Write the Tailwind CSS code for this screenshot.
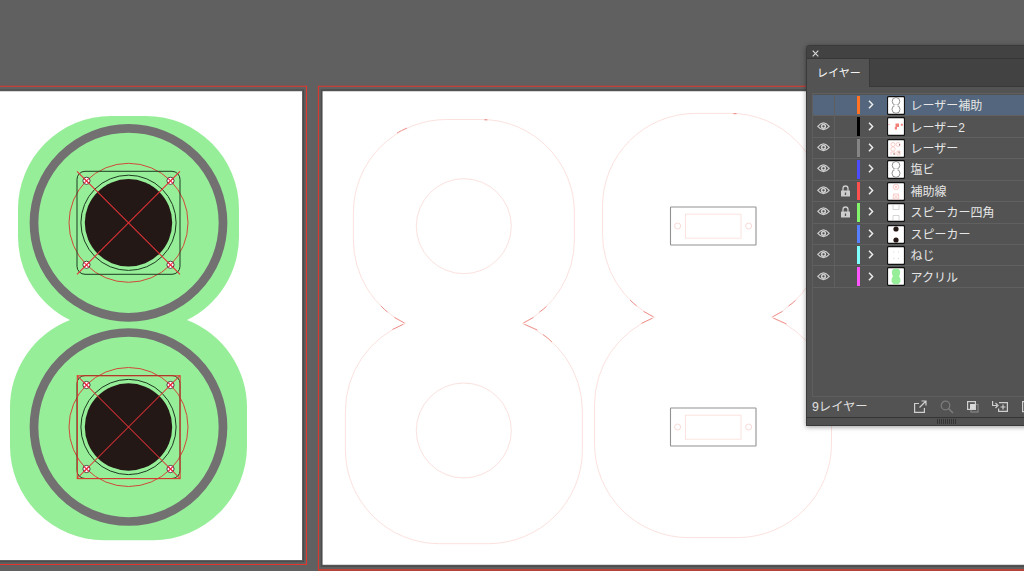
<!DOCTYPE html>
<html lang="ja">
<head>
<meta charset="utf-8">
<title>レイヤー</title>
<script src="https://cdn.jsdelivr.net/npm/@tailwindcss/browser@4"></script>
</head>
<body class="relative h-[571px] w-[1024px] overflow-hidden bg-[#606060] font-['Liberation_Sans','Noto_Sans_CJK_JP',sans-serif]">
<svg class="block" width="1024" height="571" viewBox="0 0 1024 571" fill="none">
  <defs>
    <path id="body" d="M93 0H128A93 93 0 0 1 221 93V120A93 93 0 0 1 169 204A94 94 0 0 1 229 292V330A94 94 0 0 1 135 424.2H86A94 94 0 0 1 -8 330V292A94 94 0 0 1 52 204A93 93 0 0 1 0 120V93A93 93 0 0 1 93 0Z"/>
    <g id="hole"><circle r="3.6" fill="#fff" stroke="#3b3030" stroke-width=".9"/><path d="M-2.5-2.5L2.5 2.5M2.5-2.5L-2.5 2.5" stroke="#f0274a" stroke-width="1.1"/></g>
    <g id="speaker">
      <circle r="94.5" stroke="#727071" stroke-width="8.7"/>
      <circle r="43.7" fill="#231815"/>
      <circle r="47.6" stroke="#1d3b20" stroke-width="1"/>
      <circle r="59.5" stroke="#cf4a37" stroke-width="1"/>
      <rect x="-51.5" y="-51.5" width="103" height="103" rx="8" stroke="#1d3b20" stroke-width="1"/>
      <use href="#hole" x="-42" y="-42"/><use href="#hole" x="42" y="-42"/><use href="#hole" x="-42" y="42"/><use href="#hole" x="42" y="42"/>
      <path d="M-51.5-51.5L51.5 51.5M51.5-51.5L-51.5 51.5" stroke="#e23136" stroke-width="1.05"/>
    </g>
    <g id="plate">
      <rect x=".5" y=".5" width="85.5" height="38" rx=".5" stroke="#929292" stroke-width="1.1"/>
      <rect x="15.5" y="7.7" width="55.5" height="24" stroke="#fbe0dc" stroke-width=".9"/>
      <circle cx="7.6" cy="19.5" r="3" stroke="#f6d5d2" stroke-width=".9"/><circle cx="78.6" cy="19.5" r="3" stroke="#f6d5d2" stroke-width=".9"/>
    </g>
    <g id="accents" stroke="#ec857f" stroke-width="1">
      <path d="M27.500 186.500Q31 190 34 192.500M41 198L51 203.500M39 210L50 204.700M193 187Q190 190 186 192.500M180 198L170 203.500M171 204.700L184 210.500" opacity=".85"/>
      <path d="M131 .3h3"/>
    </g>
  </defs>
  <!-- left artboard -->
  <path d="M0 86.300H306.500V564.500H0" stroke="#df372d" stroke-width="1.1"/>
  <path d="M0 90H303.600V561.600H0" stroke="#4b4b4b" stroke-width="1.2"/>
  <path d="M0 91.200H302V560H0Z" fill="#fff"/>
  <!-- right artboard -->
  <path d="M1024 86.300H318.400V569.800H1024" stroke="#df372d" stroke-width="1.1"/>
  <path d="M318 569.900H1024" stroke="#c23f35" stroke-width="1.9"/>
  <path d="M1024 90H321.500V566.200H1024" stroke="#4b4b4b" stroke-width="1.4"/>
  <path d="M1024 91.200H322.600V564.800H1024Z" fill="#fff"/>

  <use href="#body" x="18" y="116" fill="#97ee99"/>
  <use href="#speaker" x="128.500" y="222.800"/>
  <use href="#speaker" x="128.500" y="427"/>
  <rect x="77.300" y="375.800" width="102.800" height="102.800" stroke="#dc3b2f" stroke-width="1.1"/>

  <use href="#body" x="353.400" y="119.500" stroke="#fbdeda" stroke-width=".9"/>
  <use href="#accents" x="353.400" y="119.500"/>
  <path d="M397 133Q401 130.500 407 128" stroke="#ef9a94" stroke-width="1"/>
  <path d="M543 334.500Q548 338 552 342" stroke="#ef9a94" stroke-width="1"/>
  <circle cx="463.800" cy="226.200" r="47.500" stroke="#fbe2df" stroke-width="1"/>
  <circle cx="463.800" cy="430.500" r="47.500" stroke="#fbe2df" stroke-width="1"/>
  <use href="#body" x="602.500" y="113.400" stroke="#fbdeda" stroke-width=".9"/>
  <use href="#accents" x="602.500" y="113.400"/>
  <use href="#plate" x="670" y="206.500"/>
  <use href="#plate" x="670" y="407.500"/>
</svg>

<section class="absolute left-[806px] top-[45px] flex h-[381px] w-[231px] flex-col overflow-hidden rounded-tl-[4px] border-b border-l border-t border-[#3a3a3a] bg-[#535353] text-[#e0e0e0] shadow-[0_1px_5px_rgba(0,0,0,0.4)]">
  <header class="flex h-[13px] shrink-0 items-center border-b border-[#363636] bg-[#424242] pl-[5px] pt-[3px]">
    <svg width="7" height="7" viewBox="0 0 7 7"><path d="M.7.7L6.300 6.300M6.300.7L.7 6.300" stroke="#d4d4d4" stroke-width="1.200"/></svg>
  </header>
  <nav class="flex h-[28px] shrink-0 bg-[#424242]">
    <div class="flex w-[63px] items-center whitespace-nowrap border-r border-[#383838] bg-[#535353] pl-[10px] text-[11px] leading-none text-[#f5f5f5]">レイヤー</div>
    <div class="grow border-b border-[#383838]"></div>
  </nav>
  <div class="ml-[5px] mt-[6px] h-[304px] shrink-0 border border-[#5e5e5e]">
    <div id="rows" class="flex flex-col pt-[1px]"></div>
  </div>
  <footer class="flex h-[20px] shrink-0 items-center pl-[5px]">
    <span class="w-[101px] whitespace-nowrap pt-[1px] text-[12.300px] leading-none">9レイヤー</span>
    <svg width="112" height="16" viewBox="0 0 112 16" fill="none" stroke="#cfcfcf" stroke-width="1.200">
      <path d="M6 4.500H1.600V13.400H11.400V9M6.500 8.500L12.500 2.500M8.500 2H13V6.500"/>
      <g stroke="#7c7c7c"><circle cx="32.500" cy="6.500" r="4.300"/><path d="M35.500 9.500L40 14" stroke-width="1.600"/></g>
      <rect x="58" y="5.500" width="7" height="7.500" stroke="#858585"/><rect x="54.600" y="2.600" width="7.800" height="7.800"/><rect x="57" y="5" width="5" height="5" fill="#d8d8d8" stroke="none"/>
      <path d="M79.600 2V6.500H84M82.500 4L85 6.500L82.500 9M86 3.600H94.400V12.400H85.600V9.500M90 5.500V10.500M87.500 8H92.500"/>
      <path d="M114 2.600H109.600V12.600H114"/>
    </svg>
  </footer>
  <div class="flex h-[9px] shrink-0 items-start border-t border-[#343434] bg-[#505050] pl-[130px]">
    <svg class="mt-[1px]" width="20" height="5" viewBox="0 0 20 5"><path d="M.5 0v5M2.500 0v5M4.500 0v5M6.500 0v5M8.500 0v5M10.500 0v5M12.500 0v5M14.500 0v5M16.500 0v5M18.500 0v5" stroke="#343434"/></svg>
  </div>
</section>

<template id="row">
  <div class="flex h-[21.430px] shrink-0 items-stretch border-b border-[#606060]">
    <div class="flex w-[21.500px] items-center justify-center border-r border-[#5f5f5f] pb-[1px]"><svg data-eye width="13" height="9" viewBox="0 0 13 9" fill="none" stroke="#cdcdcd"><path d="M.8 4.300Q6.500-2.500 12.200 4.300Q6.500 11 .8 4.300Z" stroke-width="1.200"/><circle cx="6.500" cy="4.300" r="1.900" stroke-width="1.500"/></svg></div>
    <div class="flex w-[22px] items-center justify-center"><svg data-lock class="ml-[-1px]" width="9" height="12" viewBox="0 0 9 12"><path d="M2 6V3.500a2.500 2.500 0 0 1 5 0V6" fill="none" stroke="#cdcdcd" stroke-width="1.300"/><rect y="5.500" width="9" height="6" rx=".5" fill="#cdcdcd"/><path d="M4.500 7.500V10" stroke="#555" stroke-width="1.300"/></svg></div>
    <div data-color class="my-[1px] w-[3.500px]"></div>
    <div class="flex w-[27px] items-center pb-[1px] pl-[8px]"><svg width="6" height="9" viewBox="0 0 6 9" fill="none"><path d="M1 .7L4.600 4.500L1 8.300" stroke="#ececec" stroke-width="1.500"/></svg></div>
    <svg data-thumb class="mt-[1px]" width="18" height="19" viewBox="0 0 18 19" fill="none"></svg>
    <div data-name class="flex grow items-center whitespace-nowrap pl-[5.500px] pt-[2px] text-[12px] leading-none text-[#e6e6e6]"></div>
  </div>
</template>
<script>
const frame = '<rect x=".5" y=".7" width="17" height="17.600" rx="1" fill="#fff" stroke="#111" stroke-width="1.200"/>';
const rings = '<circle cx="9" cy="5.300" r="3.800" stroke="#858585" stroke-width=".9"/><circle cx="9" cy="13.300" r="4" stroke="#858585" stroke-width=".9"/><path d="M7.300 9.200h3.400" stroke="#fff" stroke-width="1.400"/>';
const layers = [
  ['レーザー補助', '#ff7322', 0, 0, rings],
  ['レーザー2', '#000000', 1, 0, '<path d="M8.500 6.500h3.500v3.500h-2v2.500H7.800v-2.500h.7zM13.800 6.800h2v2h-2zM1.500 7h1v1h-1z" fill="#f28078"/>'],
  ['レーザー', '#858585', 1, 0, '<g stroke="#f6c2bd" stroke-width=".8"><circle cx="6" cy="5.500" r="2"/><circle cx="11" cy="5.500" r="2"/><circle cx="6" cy="10" r="2.200"/><path d="M4 16v-3h4v3M10 16v-4h3v4z"/></g><path d="M12.500 5v1.500M7 14v2M12 12.500v2" stroke="#8a6060" stroke-width=".8"/>'],
  ['塩ビ', '#4d4dff', 1, 0, rings],
  ['補助線', '#ff5050', 1, 1, '<g stroke="#f8bfbb" stroke-width=".8"><circle cx="9" cy="5" r="2.800"/><path d="M7.500 3.500l3 3M10.500 3.500l-3 3M6.300 12h5.400v5H6.300zM7 12.700l4 4M11 12.700l-4 4"/></g>'],
  ['スピーカー四角', '#82f56a', 1, 1, '<path d="M6 2v4.500h6V2M6 17v-4.500h6V17" stroke="#cccccc" stroke-width=".8"/>'],
  ['スピーカー', '#5680ff', 1, 0, '<circle cx="9" cy="4" r="2.600" fill="#231815"/><circle cx="9" cy="15" r="2.600" fill="#231815"/>'],
  ['ねじ', '#80ffff', 1, 0, '<path d="M6.500 6h.8M11 6h.8M6.500 12.500h.8M11 12.500h.8" stroke="#c8c8c8"/>'],
  ['アクリル', '#ff55ff', 1, 0, '<path d="M7 1.800h4q2.500 1 2 4q0 2-1 3.500q1.500 1.500 1.500 4q0 3-3 4h-3q-3-1-3-4q0-2.500 1.500-4q-1-1.500-1-3.500q-.5-3 2-4z" fill="#97ee99"/>']
];
layers.forEach(([name, color, eye, lock, art], i) => {
  const n = document.getElementById('row').content.firstElementChild.cloneNode(true);
  if (!i) n.classList.add('bg-[#53667d]');
  if (!eye) n.querySelector('[data-eye]').remove();
  if (!lock) n.querySelector('[data-lock]').remove();
  n.querySelector('[data-color]').style.backgroundColor = color;
  n.querySelector('[data-thumb]').innerHTML = frame + art;
  n.querySelector('[data-name]').textContent = name;
  document.getElementById('rows').append(n);
});
</script>
</body>
</html>
